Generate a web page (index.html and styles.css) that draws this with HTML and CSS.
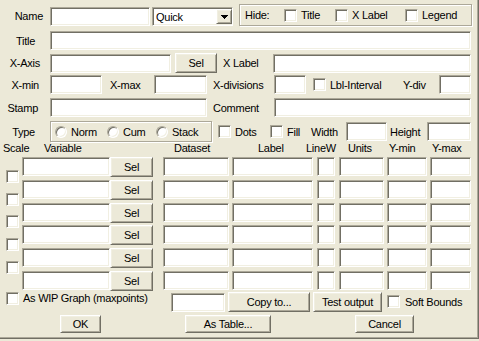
FILE: index.html
```html
<!DOCTYPE html>
<html>
<head>
<meta charset="utf-8">
<link rel="stylesheet" href="styles.css">
</head>
<body>
<div class="dlg">
  <div class="row r1">
    <span class="lbl l-name">Name</span>
    <div class="edit e-name"></div>
    <div class="combo">
      <span class="combo-text">Quick</span>
      <span class="drop"><svg width="7" height="4" viewBox="0 0 7 4"><path d="M0 0h7v1h-1v1h-1v1h-1v1h-1v-1h-1v-1h-1v-1h-1z" fill="#000"/></svg></span>
    </div>
    <div class="grp hide">
      <span class="hide-lbl">Hide:</span>
      <span class="opt o-title"><span class="chk"></span><span class="opt-txt">Title</span></span>
      <span class="opt o-xlabel"><span class="chk"></span><span class="opt-txt">X Label</span></span>
      <span class="opt"><span class="chk"></span><span class="opt-txt">Legend</span></span>
    </div>
  </div>

  <div class="row r2">
    <span class="lbl l-title">Title</span>
    <div class="edit e-title"></div>
  </div>

  <div class="row r3">
    <span class="lbl l-xaxis">X-Axis</span>
    <div class="edit e-xaxis"></div>
    <button class="btn b-xsel">Sel</button>
    <span class="txt t-xlabel">X Label</span>
    <div class="edit e-xlabel"></div>
  </div>

  <div class="row r4">
    <span class="lbl l-xmin">X-min</span>
    <div class="edit e-xmin"></div>
    <span class="txt t-xmax">X-max</span>
    <div class="edit e-xmax"></div>
    <span class="txt t-xdiv">X-divisions</span>
    <div class="edit e-xdiv"></div>
    <span class="chk c-lbl"></span>
    <span class="txt t-lblint">Lbl-Interval</span>
    <span class="txt t-ydiv">Y-div</span>
    <div class="edit e-ydiv"></div>
  </div>

  <div class="row r5">
    <span class="lbl l-stamp">Stamp</span>
    <div class="edit e-stamp"></div>
    <span class="txt t-comment">Comment</span>
    <div class="edit e-comment"></div>
  </div>

  <div class="row r6">
    <span class="lbl l-type">Type</span>
    <div class="grp typegrp">
      <span class="ropt ro-norm"><span class="rad"></span><span class="opt-txt">Norm</span></span>
      <span class="ropt ro-cum"><span class="rad"></span><span class="opt-txt">Cum</span></span>
      <span class="ropt"><span class="rad"></span><span class="opt-txt">Stack</span></span>
    </div>
    <span class="chk c-dots"></span>
    <span class="txt t-dots">Dots</span>
    <span class="chk"></span>
    <span class="txt t-fill">Fill</span>
    <span class="txt t-width">Width</span>
    <div class="edit e-width"></div>
    <span class="txt t-height">Height</span>
    <div class="edit e-height"></div>
  </div>

  <div class="row hdr">
    <span class="h h-scale">Scale</span>
    <span class="h h-var">Variable</span>
    <span class="h h-ds">Dataset</span>
    <span class="h h-label">Label</span>
    <span class="h h-linew">LineW</span>
    <span class="h h-units">Units</span>
    <span class="h h-ymin">Y-min</span>
    <span class="h">Y-max</span>
  </div>

  <div class="grid">
    <div class="scale-col">
      <span class="chk"></span>
      <span class="chk"></span>
      <span class="chk"></span>
      <span class="chk"></span>
      <span class="chk"></span>
    </div>
    <div class="grows">
      <div class="grow">
        <div class="edit g-var"></div><button class="btn g-sel">Sel</button>
        <div class="edit g-ds"></div><div class="edit g-label"></div><div class="edit g-linew"></div>
        <div class="edit g-units"></div><div class="edit g-ymin"></div><div class="edit g-ymax"></div>
      </div>
      <div class="grow">
        <div class="edit g-var"></div><button class="btn g-sel">Sel</button>
        <div class="edit g-ds"></div><div class="edit g-label"></div><div class="edit g-linew"></div>
        <div class="edit g-units"></div><div class="edit g-ymin"></div><div class="edit g-ymax"></div>
      </div>
      <div class="grow">
        <div class="edit g-var"></div><button class="btn g-sel">Sel</button>
        <div class="edit g-ds"></div><div class="edit g-label"></div><div class="edit g-linew"></div>
        <div class="edit g-units"></div><div class="edit g-ymin"></div><div class="edit g-ymax"></div>
      </div>
      <div class="grow">
        <div class="edit g-var"></div><button class="btn g-sel">Sel</button>
        <div class="edit g-ds"></div><div class="edit g-label"></div><div class="edit g-linew"></div>
        <div class="edit g-units"></div><div class="edit g-ymin"></div><div class="edit g-ymax"></div>
      </div>
      <div class="grow">
        <div class="edit g-var"></div><button class="btn g-sel">Sel</button>
        <div class="edit g-ds"></div><div class="edit g-label"></div><div class="edit g-linew"></div>
        <div class="edit g-units"></div><div class="edit g-ymin"></div><div class="edit g-ymax"></div>
      </div>
      <div class="grow">
        <div class="edit g-var"></div><button class="btn g-sel">Sel</button>
        <div class="edit g-ds"></div><div class="edit g-label"></div><div class="edit g-linew"></div>
        <div class="edit g-units"></div><div class="edit g-ymin"></div><div class="edit g-ymax"></div>
      </div>
    </div>
  </div>

  <div class="row rb">
    <span class="chk c-wip"></span>
    <span class="txt t-wip">As WIP Graph (maxpoints)</span>
    <div class="edit e-wip"></div>
    <button class="btn b-copy">Copy to...</button>
    <button class="btn b-test">Test output</button>
    <span class="chk c-soft"></span>
    <span class="txt t-soft">Soft Bounds</span>
  </div>

  <div class="row rl">
    <button class="btn b-ok">OK</button>
    <button class="btn b-table">As Table...</button>
    <button class="btn b-cancel">Cancel</button>
  </div>
</div>
</body>
</html>
```

FILE: styles.css
```css
html, body {
  margin: 0;
  padding: 0;
  background: #ECE9D8;
}
body {
  font-family: "Liberation Sans", Arial, sans-serif;
  font-size: 11px;
  letter-spacing: -0.25px;
  color: #000;
}
.dlg {
  box-sizing: border-box;
  width: 479px;
  height: 339px;
  background: #ECE9D8;
  border-right: 1px solid #716F64;
  border-bottom: 1px solid #716F64;
  box-shadow: inset -1px -1px #ACA899;
  overflow: hidden;
}
.row {
  display: flex;
  align-items: center;
}
.lbl {
  flex: none;
  text-align: right;
  white-space: nowrap;
}
.txt {
  flex: none;
  white-space: nowrap;
}
.edit {
  flex: none;
  box-sizing: border-box;
  height: 19px;
  background: #fff;
  border: 1px solid;
  border-color: #ACA899 #fff #fff #ACA899;
  box-shadow: inset 1px 1px #716F64, inset -1px -1px #F1EFE2;
}
.btn {
  flex: none;
  box-sizing: border-box;
  height: 20px;
  margin: 0;
  padding: 0;
  font: inherit;
  letter-spacing: inherit;
  color: #000;
  background: #ECE9D8;
  border: 1px solid;
  border-color: #fff #716F64 #716F64 #fff;
  box-shadow: inset 1px 1px #F1EFE2, inset -1px -1px #ACA899;
  display: flex;
  align-items: center;
  justify-content: center;
}
.chk {
  flex: none;
  box-sizing: border-box;
  width: 13px;
  height: 13px;
  background: #fff;
  border: 1px solid;
  border-color: #ACA899 #fff #fff #ACA899;
  box-shadow: inset 1px 1px #716F64, inset -1px -1px #F1EFE2;
}
.rad {
  flex: none;
  box-sizing: border-box;
  width: 12px;
  height: 12px;
  border-radius: 50%;
  background: #fff;
  border: 1px solid;
  border-color: #ACA899 #fff #fff #ACA899;
  box-shadow: inset 1px 1px #716F64, inset -1px -1px #F1EFE2;
}
.grp {
  flex: none;
  box-sizing: border-box;
  border: 1px solid #ACA899;
  box-shadow: inset 1px 1px #fff, 1px 1px #fff;
  display: flex;
  align-items: center;
}
.opt, .ropt {
  display: flex;
  align-items: center;
  flex: none;
}
.opt-txt {
  margin-left: 4px;
  white-space: nowrap;
}

/* row 1 */
.r1 { margin-top: 4px; height: 22px; align-items: flex-start; }
.r1 .l-name { width: 43px; margin-top: 3px; line-height: 19px; }
.e-name { width: 100px; margin-left: 7px; margin-top: 3px; }
.combo {
  flex: none;
  box-sizing: border-box;
  width: 81px;
  height: 19px;
  margin-left: 2px;
  margin-top: 3px;
  background: #fff;
  border: 1px solid;
  border-color: #ACA899 #fff #fff #ACA899;
  box-shadow: inset 1px 1px #716F64, inset -1px -1px #F1EFE2;
  display: flex;
  align-items: center;
  padding-left: 3px;
}
.combo-text { flex: 1; }
.drop {
  box-sizing: border-box;
  width: 16px;
  height: 15px;
  background: #ECE9D8;
  border: 1px solid;
  border-color: #fff #716F64 #716F64 #fff;
  box-shadow: inset 1px 1px #F1EFE2, inset -1px -1px #ACA899;
  display: flex;
  align-items: center;
  justify-content: center;
}
.drop svg { display: block; }
.hide {
  width: 233px;
  height: 22px;
  margin-left: 6px;
  padding-left: 5px;
}
.hide-lbl { width: 39px; flex: none; }
.o-title { width: 51px; }
.o-xlabel { width: 70px; }

/* row 2 */
.r2 { margin-top: 5px; height: 19px; }
.l-title { width: 35px; }
.e-title { width: 421px; margin-left: 15px; }

/* row 3 */
.r3 { margin-top: 3px; height: 20px; }
.l-xaxis { width: 40px; }
.e-xaxis { width: 121px; margin-left: 10px; }
.b-xsel { width: 42px; margin-left: 4px; }
.t-xlabel { width: 50px; margin-left: 6px; }
.e-xlabel { width: 198px; }

/* row 4 */
.r4 { margin-top: 2px; height: 19px; }
.l-xmin { width: 39px; }
.e-xmin { width: 52px; margin-left: 11px; }
.t-xmax { width: 44px; margin-left: 8px; }
.e-xmax { width: 53px; }
.t-xdiv { width: 61px; margin-left: 6px; }
.e-xdiv { width: 32px; }
.c-lbl { margin-left: 7px; }
.t-lblint { width: 73px; margin-left: 4px; }
.t-ydiv { width: 36px; }
.e-ydiv { width: 32px; }

/* row 5 */
.r5 { margin-top: 4px; height: 19px; }
.l-stamp { width: 38px; }
.e-stamp { width: 157px; margin-left: 12px; }
.t-comment { width: 61px; margin-left: 6px; }
.e-comment { width: 197px; }

/* row 6 */
.r6 { margin-top: 4px; height: 21px; }
.l-type { width: 35px; }
.typegrp {
  width: 162px;
  height: 21px;
  margin-left: 15px;
  padding-left: 4px;
}
.ro-norm { width: 52px; }
.ro-cum { width: 49px; }
.c-dots { margin-left: 6px; }
.t-dots { width: 35px; margin-left: 4px; }
.t-fill { width: 24px; margin-left: 4px; }
.t-width { width: 35px; }
.e-width { width: 41px; }
.t-height { width: 37px; margin-left: 3px; }
.e-height { width: 44px; }

/* header */
.hdr { height: 13px; line-height: 13px; }
.h { flex: none; white-space: nowrap; }
.h-scale { width: 41px; margin-left: 3px; }
.h-var { width: 130px; }
.h-ds { width: 84px; }
.h-label { width: 48px; }
.h-linew { width: 42px; }
.h-units { width: 41px; }
.h-ymin { width: 43px; }

/* grid */
.grid {
  display: flex;
  margin-top: 2px;
}
.scale-col {
  width: 22px;
  flex: none;
  display: flex;
  flex-direction: column;
  padding-top: 13px;
}
.scale-col .chk { margin-left: 6px; }
.scale-col .chk + .chk { margin-top: 10px; }
.scale-col .chk:nth-child(3) { margin-top: 9px; }
.grows {
  display: flex;
  flex-direction: column;
}
.grow {
  display: flex;
  height: 20px;
  align-items: flex-start;
}
.grow + .grow { margin-top: 3px; }
.grow:nth-child(4) { margin-top: 2px; }
.g-var { width: 88px; }
.g-sel { width: 43px; }
.g-ds { width: 66px; margin-left: 10px; }
.g-label { width: 81px; margin-left: 3px; }
.g-linew { width: 18px; margin-left: 4px; }
.g-units { width: 45px; margin-left: 4px; }
.g-ymin { width: 40px; margin-left: 3px; }
.g-ymax { width: 41px; margin-left: 3px; }

/* bottom row */
.rb { margin-top: 1px; height: 20px; align-items: flex-start; }
.c-wip { margin-left: 6px; }
.t-wip { width: 148px; margin-left: 4px; line-height: 13px; }
.e-wip { width: 54px; margin-top: 1px; }
.b-copy { width: 82px; margin-left: 3px; }
.b-test { width: 69px; margin-left: 3px; }
.c-soft { margin-left: 5px; margin-top: 3px; }
.t-soft { margin-left: 5px; line-height: 20px; }

/* last row */
.rl { margin-top: 3px; height: 18px; }
.rl .btn { height: 18px; }
.b-ok { width: 41px; margin-left: 60px; }
.b-table { width: 86px; margin-left: 84px; }
.b-cancel { width: 59px; margin-left: 84px; }
```
